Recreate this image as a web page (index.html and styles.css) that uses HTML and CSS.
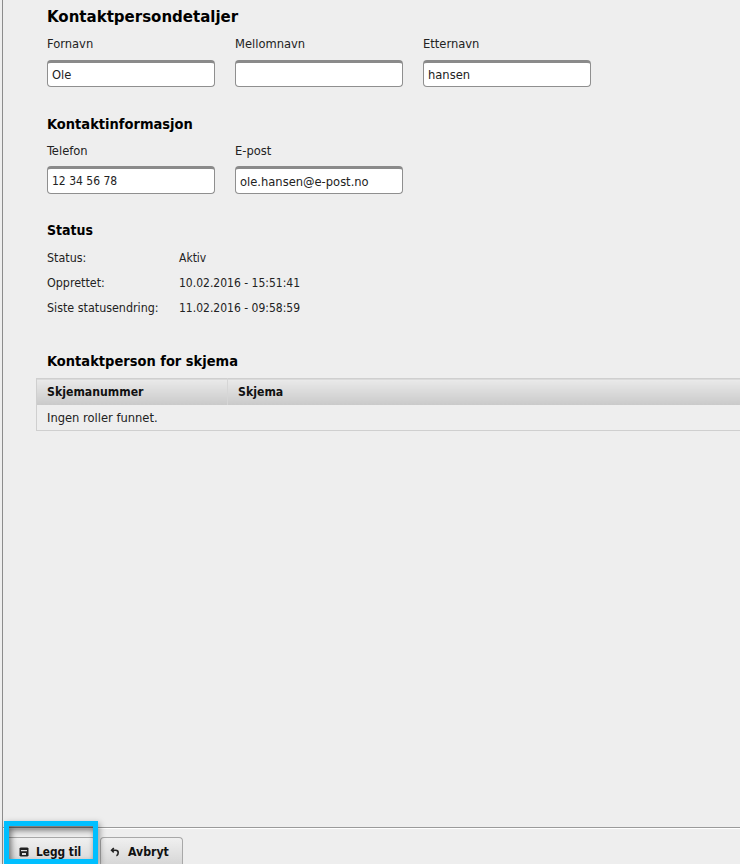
FILE: index.html
```html
<!DOCTYPE html>
<html lang="no">
<head>
<meta charset="utf-8">
<title>Kontaktperson</title>
<link rel="stylesheet" href="styles.css">
</head>
<body>
<div class="page">
  <main class="content">
    <section class="group first">
      <h2>Kontaktpersondetaljer</h2>
      <div class="fields">
        <label class="field"><span>Fornavn</span><input type="text" value="Ole"></label>
        <label class="field"><span>Mellomnavn</span><input type="text" value=""></label>
        <label class="field"><span>Etternavn</span><input type="text" value="hansen"></label>
      </div>
    </section>
    <section class="group second">
      <h2>Kontaktinformasjon</h2>
      <div class="fields">
        <label class="field"><span>Telefon</span><input class="digits" type="text" value="12 34 56 78"></label>
        <label class="field"><span>E-post</span><input type="text" value="ole.hansen@e-post.no"></label>
      </div>
    </section>
    <section class="group status">
      <h2>Status</h2>
      <dl class="info">
        <dt>Status:</dt><dd>Aktiv</dd>
        <dt>Opprettet:</dt><dd>10.02.2016 - 15:51:41</dd>
        <dt>Siste statusendring:</dt><dd>11.02.2016 - 09:58:59</dd>
      </dl>
    </section>
    <section class="forms">
      <h2>Kontaktperson for skjema</h2>
      <table>
        <thead><tr><th class="col-num">Skjemanummer</th><th>Skjema</th></tr></thead>
        <tbody><tr><td colspan="2">Ingen roller funnet.</td></tr></tbody>
      </table>
    </section>
  </main>
  <footer class="actions">
    <button type="button" class="btn save">
      <svg width="10" height="10" viewBox="0 0 10 10"><path fill="#222" d="M1.5 0.5h7l1 1v7l-1 1h-7l-1-1v-7z"/><rect x="2" y="3" width="6" height="1.2" fill="#ddd"/><rect x="3" y="6" width="4" height="2" fill="#ddd"/></svg>
      Legg til
    </button>
    <button type="button" class="btn cancel">
      <svg width="10" height="10" viewBox="0 0 10 10"><path fill="none" stroke="#222" stroke-width="1.6" d="M3.8 1 1.6 3.2l2.2 2.2M2 3.2h3.6c1.7 0 2.6 1 2.6 2.5S7.4 8.4 6.4 8.8"/></svg>
      Avbryt
    </button>
  </footer>
  <div class="highlight"></div>
</div>
</body>
</html>
```
FILE: styles.css
```css
* { box-sizing: border-box; }
html, body { margin: 0; height: 100%; }
body {
  background: #eeeeee;
  font-family: "DejaVu Sans Condensed", "DejaVu Sans", sans-serif;
  font-size: 12.8px;
  color: #222;
  overflow: hidden;
}
.page {
  position: relative;
  height: 864px;
  display: flex;
  flex-direction: column;
  margin-left: 2px;
  border-left: 1px solid #8c8c8c;
}
.content { flex: 1; padding-left: 44px; }
h2 {
  margin: 0;
  font-size: 14.5px;
  line-height: 20px;
  font-weight: bold;
  color: #000;
}
.first h2 { font-size: 16.7px; }
.status h2 { font-size: 14px; }
.group { padding-top: 6px; }
.fields { display: flex; gap: 20px; margin-top: 9px; }
.first .fields { margin-top: 10px; }
.field { display: flex; flex-direction: column; width: 168px; }
.field span { line-height: 16px; }
.field input {
  margin-top: 8px;
  height: 27px;
  width: 168px;
  padding: 0 3px 0 4px;
  border: 1px solid #8f8f8f;
  border-top: 3px solid #8a8a8a;
  border-radius: 4px;
  background: #fff;
  font: inherit;
  color: #222;
}
.field input.digits { font-size: 12px; }
.second .field input { height: 28px; margin-top: 7px; }
.group.second { margin-top: 21px; }
.group.status { margin-top: 20px; }
.info {
  display: grid;
  grid-template-columns: 132px 1fr;
  grid-auto-rows: 25px;
  margin: 5px 0 0;
  align-items: center;
  font-size: 12.4px;
}
.info dd { margin: 0; font-size: 12px; }
.forms { margin-top: 31px; margin-left: -11px; }
.forms h2 { margin-left: 11px; }
table {
  margin-top: 7px;
  width: calc(100% + 1px);
  border-collapse: collapse;
  border: 1px solid #cfcfcf;
  border-right: 0;
}
th {
  height: 26px;
  padding: 0 10px;
  text-align: left;
  font-size: 12.2px;
  color: #111;
  background: linear-gradient(#eaeaea, #c9c9c9);
  border-right: 1px solid #d6d6d6;
}
th:last-child { border-right: 0; }
.col-num { width: 191px; }
td { height: 26px; padding: 0 10px; }
.actions {
  flex: none;
  height: 37px;
  display: flex;
  gap: 4px;
  padding: 9px 0 0 1px;
  border-top: 1px solid #9a9a9a;
  box-shadow: inset 0 1px 0 #fff;
}
.btn {
  height: 28px;
  display: flex;
  align-items: center;
  gap: 8px;
  font: bold 12.2px "DejaVu Sans Condensed", "DejaVu Sans", sans-serif;
  color: #111;
  background: linear-gradient(#f0f0f0, #d6d6d6);
  border: 1px solid #a8a8a8;
  border-bottom: 0;
  border-radius: 4px 4px 0 0;
}
.save { width: 92px; padding: 0 0 0 14px; gap: 7px; font-size: 11.8px; }
.cancel { width: 83px; padding: 0 0 0 9px; }
.highlight {
  position: absolute;
  left: 1px;
  top: 821px;
  width: 94px;
  height: 43px;
  border: 5px solid #00bfff;
  box-shadow: 2px 2px 6px rgba(0,0,0,.35), inset 2px 4px 6px rgba(0,0,0,.55);
}
```
